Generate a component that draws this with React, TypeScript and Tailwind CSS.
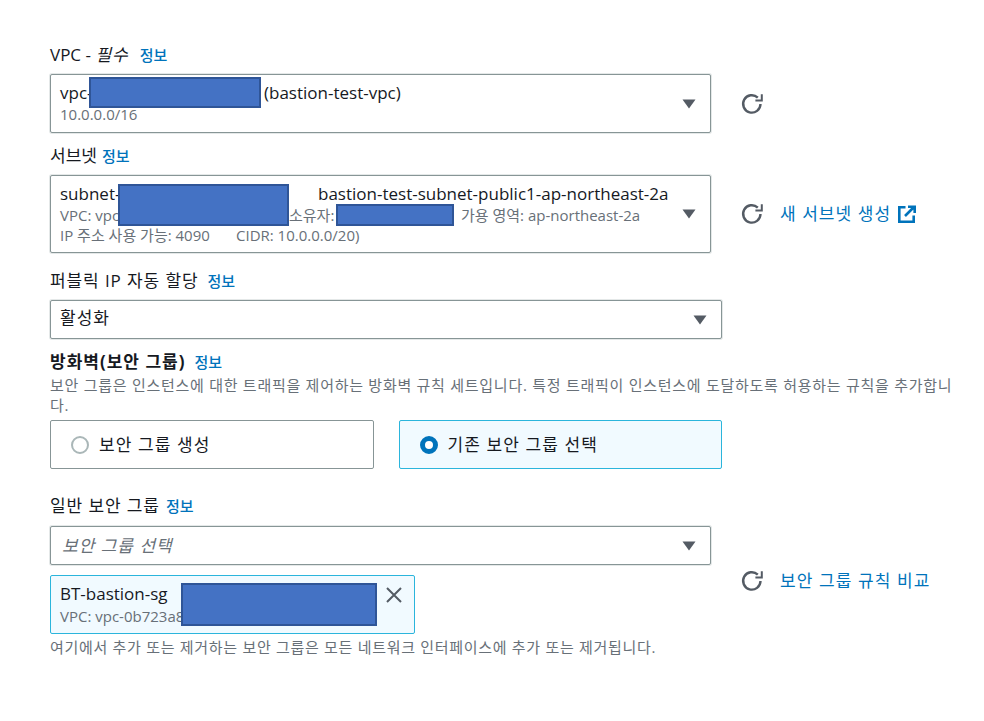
import type { ReactNode } from "react";

const Caret = () => (
  <svg width="14" height="10" viewBox="0 0 14 10" className="shrink-0">
    <path d="M0.5 0.5h13L7 9.5z" fill="#545b64" />
  </svg>
);

const Refresh = () => (
  <svg width="24" height="24" viewBox="0 0 24 24" fill="none" stroke="#545b64" strokeWidth="2.4" className="shrink-0">
    <path d="M20.5 12a8.7 8.7 0 1 1-2.7-6.4" />
    <path d="M21.8 2.2v6.4h-6.4" strokeWidth="2" />
  </svg>
);

const ExternalIcon = () => (
  <svg width="18" height="18" viewBox="0 0 18 18" fill="none" stroke="#0073bb" strokeWidth="2.6" className="shrink-0">
    <path d="M7.5 2.3H1.3v14.4H15.7V10.5" />
    <path d="M7 11l8.5-8.5M10 1.8h6.7V8" />
  </svg>
);

const Info = ({ className = "" }: { className?: string }) => (
  <span className={`text-[15px] font-medium text-[#0073bb] ${className}`}>정보</span>
);

const Redact = ({ className }: { className: string }) => (
  <div className={`absolute bg-[#4472c4] border-2 border-[#2f5597] ${className}`} />
);

function Select({ children, className }: { children: ReactNode; className: string }) {
  return (
    <div className={`relative flex items-center justify-between pl-[9px] pr-[14px] bg-white border border-[#879596] rounded-[2px] shadow-[0_0_0_1px_#e4e8e8] ${className}`}>
      <div className="min-w-0 flex-1">{children}</div>
      <Caret />
    </div>
  );
}

function Radio({ label, checked }: { label: string; checked?: boolean }) {
  return (
    <div
      className={`flex-1 flex items-center gap-[10px] px-[20px] rounded-[2px] border ${
        checked ? "bg-[#f1faff] border-[#2bb5dc]" : "bg-white border-[#879596]"
      }`}
    >
      {checked ? (
        <span className="w-[18px] h-[18px] rounded-full border-[5px] border-[#0073bb] bg-white" />
      ) : (
        <span className="w-[18px] h-[18px] rounded-full border-2 border-[#aab7b8] bg-white" />
      )}
      <span className="text-[17px] tracking-[1.1px] text-[#16191f]">{label}</span>
    </div>
  );
}

export default function App() {
  return (
    <div
      className="w-[984px] h-[721px] overflow-hidden bg-white pl-[50px] pt-[45px] text-[#16191f]"
      style={{ fontFamily: '"Open Sans", "Noto Sans CJK KR", sans-serif' }}
    >
      {/* VPC */}
      <div className="h-[29px] flex items-start text-[17px] leading-[20px] gap-[11px]">
        <span>VPC - <i className="tracking-[1px]">필수</i></span>
        <Info />
      </div>
      <div className="flex items-center">
        <Select className="w-[661px] h-[59px]">
          <div className="flex text-[17px] leading-[22px] mt-[-1px]">
            <span className="w-[204px]">vpc-</span>
            <span>(bastion-test-vpc)</span>
          </div>
          <div className="text-[15px] leading-[20px] text-[#687078]">10.0.0.0/16</div>
          <Redact className="left-[38px] top-[2px] w-[172px] h-[31px]" />
        </Select>
        <div className="ml-[29px]"><Refresh /></div>
      </div>

      {/* 서브넷 */}
      <div className="h-[42px] pt-[13px] flex items-start text-[17px] leading-[20px] gap-[5px]">
        <span>서브넷</span>
        <Info />
      </div>
      <div className="flex items-center">
        <Select className="w-[661px] h-[78px]">
          <div className="flex text-[17px] leading-[22px]">
            <span className="w-[258px]">subnet-</span>
            <span>bastion-test-subnet-public1-ap-northeast-2a</span>
          </div>
          <div className="flex text-[15px] leading-[20px] text-[#687078]">
            <span className="w-[229px]">VPC: vpc-</span>
            <span className="w-[172px]">소유자:</span>
            <span>가용 영역: ap-northeast-2a</span>
          </div>
          <div className="flex text-[15px] leading-[20px] text-[#687078]">
            <span className="w-[176px]">IP 주소 사용 가능: 4090</span>
            <span>CIDR: 10.0.0.0/20)</span>
          </div>
          <Redact className="left-[67px] top-[8px] w-[171px] h-[42px]" />
          <Redact className="left-[285px] top-[28px] w-[118px] h-[22px]" />
        </Select>
        <div className="ml-[29px]"><Refresh /></div>
        <span className="ml-[16px] text-[17px] tracking-[1.05px] text-[#0073bb]">새 서브넷 생성</span>
        <span className="ml-[7px]"><ExternalIcon /></span>
      </div>

      {/* 퍼블릭 IP */}
      <div className="h-[47px] pt-[18px] flex items-start text-[17px] leading-[20px] gap-[9px]">
        <span className="tracking-[0.9px]">퍼블릭 IP 자동 할당</span>
        <Info />
      </div>
      <Select className="w-[672px] h-[39px]">
        <span className="block text-[17px] leading-[22px] mt-[-3px] tracking-[1px]">활성화</span>
      </Select>

      {/* 방화벽 */}
      <div className="h-[36px] pt-[13px] flex items-start text-[17px] leading-[20px] gap-[9px]">
        <span className="font-bold tracking-[1px]">방화벽(보안 그룹)</span>
        <Info />
      </div>
      <p className="w-[905px] text-[15px] leading-[20px] tracking-[0.73px] text-[#687078]">
        보안 그룹은 인스턴스에 대한 트래픽을 제어하는 방화벽 규칙 세트입니다. 특정 트래픽이 인스턴스에 도달하도록 허용하는 규칙을 추가합니다.
      </p>
      <div className="flex gap-[25px] w-[672px] h-[49px] mt-[5px]">
        <Radio label="보안 그룹 생성" />
        <Radio label="기존 보안 그룹 선택" checked />
      </div>

      {/* 일반 보안 그룹 */}
      <div className="h-[57px] pt-[27px] flex items-start text-[17px] leading-[20px] gap-[6px]">
        <span className="tracking-[0.9px]">일반 보안 그룹</span>
        <Info />
      </div>
      <div className="flex">
        <div>
          <Select className="w-[661px] h-[39px]">
            <i className="block text-[17px] leading-[22px] ml-[2px] tracking-[1px] text-[#687078]">보안 그룹 선택</i>
          </Select>
          <div className="relative w-[365px] h-[59px] mt-[10px] pl-[9px] pt-[7px] bg-[#f1faff] border border-[#2bb5dc] rounded-[2px]">
            <div className="text-[17px] leading-[22px]">BT-bastion-sg</div>
            <div className="text-[15px] leading-[20px] mt-[1px] text-[#687078] whitespace-nowrap">VPC: vpc-0b723a8</div>
            <Redact className="left-[130px] top-[7px] w-[196px] h-[43px]" />
            <svg width="18" height="18" viewBox="0 0 18 18" stroke="#545b64" strokeWidth="2" className="absolute right-[11px] top-[10px]">
              <path d="M2 2l14 14M16 2L2 16" />
            </svg>
          </div>
        </div>
        <div className="flex items-center self-start mt-[42px] ml-[29px]">
          <Refresh />
          <span className="ml-[16px] text-[17px] tracking-[1.1px] text-[#0073bb]">보안 그룹 규칙 비교</span>
        </div>
      </div>
      <p className="mt-[3px] text-[15px] leading-[20px] tracking-[0.7px] text-[#687078]">
        여기에서 추가 또는 제거하는 보안 그룹은 모든 네트워크 인터페이스에 추가 또는 제거됩니다.
      </p>
    </div>
  );
}
